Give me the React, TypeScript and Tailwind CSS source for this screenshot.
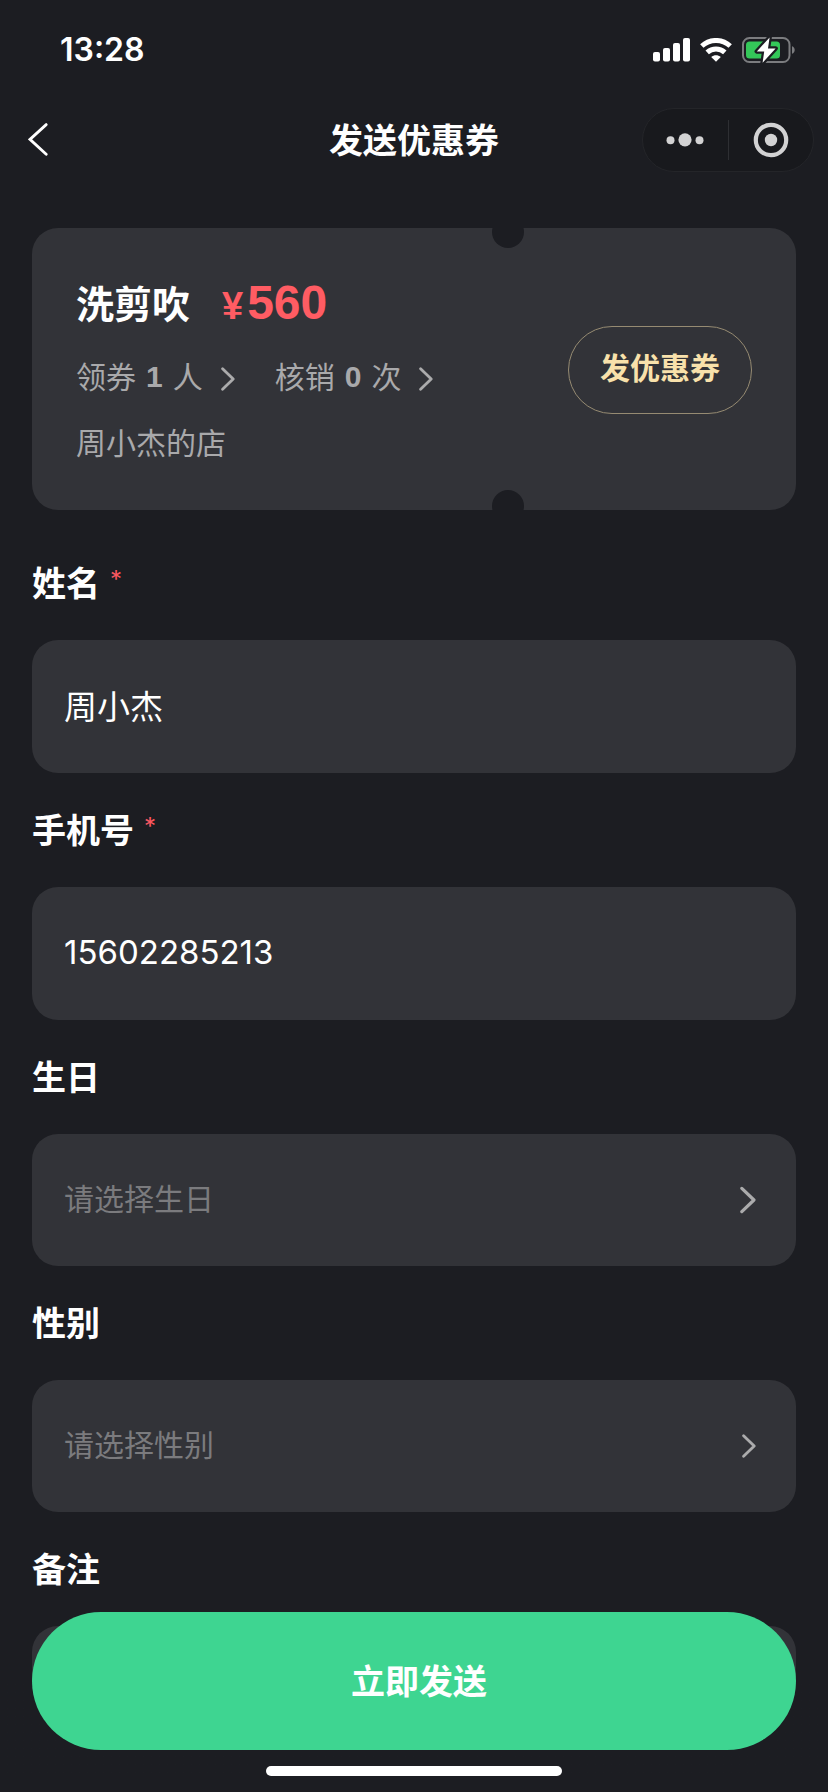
import { useState } from "react";

// ─────────────────────────────────────────────────────────────
// Icons
// ─────────────────────────────────────────────────────────────

const SignalIcon = () => (
  <svg width="38" height="24" viewBox="0 0 38 24" fill="#fff" aria-hidden="true">
    <rect x="1" y="14" width="7" height="9.5" rx="2" />
    <rect x="11" y="10" width="7" height="13.5" rx="2" />
    <rect x="21" y="5" width="7" height="18.5" rx="2" />
    <rect x="31" y="0" width="7" height="23.5" rx="2" />
  </svg>
);

const WifiIcon = () => (
  <svg width="32" height="24" viewBox="0 0 32 24" fill="none" aria-hidden="true">
    <path d="M1.8 8C10 .6 22 .6 30.2 8" stroke="#fff" strokeWidth="5" />
    <path d="M7.2 14.4c5-4.6 12.6-4.6 17.6 0" stroke="#fff" strokeWidth="5" />
    <path d="M16 23.8l-4.8-4.8c2.8-2.3 6.8-2.3 9.6 0z" fill="#fff" />
  </svg>
);

const BatteryIcon = () => (
  <svg width="54" height="28" viewBox="0 0 54 28" fill="none" aria-hidden="true">
    <rect x="1" y="2" width="46.5" height="24" rx="6.5" stroke="#7b7c7f" strokeWidth="2" />
    <path d="M50 10.2c3.6 1.2 3.6 6.4 0 7.6z" fill="#7b7c7f" />
    <rect x="4" y="5.5" width="34" height="17" rx="3.5" fill="#34c759" />
    <path
      d="M27.6 1.4L14.8 15.4h7.4l-1.6 11.4 13-14.4h-7.6z"
      fill="#fff"
      stroke="#1c1d22"
      strokeWidth="4.5"
      strokeLinejoin="round"
      paintOrder="stroke"
    />
  </svg>
);

const BackIcon = () => (
  <svg width="20" height="34" viewBox="0 0 20 34" fill="none" aria-hidden="true">
    <path d="M18.2 1.6L2 16.4l16.2 14.8" stroke="#fff" strokeWidth="2.8" strokeLinecap="round" />
  </svg>
);

const MoreIcon = () => (
  <svg width="38" height="14" viewBox="0 0 38 14" fill="#d2d2d3" aria-hidden="true">
    <circle cx="4.5" cy="7.3" r="4" />
    <circle cx="19" cy="6.8" r="6.6" />
    <circle cx="33.5" cy="7.3" r="4" />
  </svg>
);

const CloseIcon = () => (
  <svg width="36" height="36" viewBox="0 0 36 36" fill="none" aria-hidden="true">
    <circle cx="18" cy="18" r="15.2" stroke="#d2d2d3" strokeWidth="4.2" />
    <circle cx="18" cy="18" r="6.2" fill="#d2d2d3" />
  </svg>
);

const ChevronIcon = ({ className }: { className: string }) => (
  <svg className={className} viewBox="0 0 14 24" fill="none" aria-hidden="true">
    <path
      d="M1.6 1.8L12.2 12 1.6 22.2"
      stroke="#ababac"
      strokeWidth="2.8"
      strokeLinecap="round"
      strokeLinejoin="round"
    />
  </svg>
);

// ─────────────────────────────────────────────────────────────
// Form pieces
// ─────────────────────────────────────────────────────────────

const FieldLabel = ({ id, text, required }: { id: string; text: string; required?: boolean }) => (
  <label htmlFor={id} className="flex gap-2.5 pt-[34px] pb-8 text-[34px] leading-12 font-semibold">
    {text}
    {required && <span className="text-2xl leading-10 font-normal text-[#fb5760]">*</span>}
  </label>
);

const Stat = ({ label, value, unit }: { label: string; value: number; unit: string }) => (
  <button type="button" className="flex items-center text-[#a9a9ab]">
    <span>{label}</span>
    <span className="mx-2.5 font-['Liberation_Sans'] font-bold">{value}</span>
    <span>{unit}</span>
    <ChevronIcon className="mt-1 ml-[18px] h-6 w-3.5" />
  </button>
);

export default function App() {
  const [name, setName] = useState("周小杰");
  const [phone, setPhone] = useState("15602285213");
  const [gender, setGender] = useState("");

  return (
    <div className="relative flex h-screen flex-col overflow-hidden bg-[#1c1d22] font-[Inter,'Noto_Sans_CJK_SC',sans-serif] text-white">
      {/* Status bar */}
      <div className="flex h-25 shrink-0 items-center justify-between pr-8 pl-15">
        <span className="text-[32px] leading-10 font-semibold">13:28</span>
        <div className="flex items-center gap-2.5">
          <SignalIcon />
          <WifiIcon />
          <BatteryIcon />
        </div>
      </div>

      {/* Nav bar */}
      <header className="grid h-20 shrink-0 grid-cols-[1fr_auto_1fr] items-center px-3.5">
        <button type="button" aria-label="返回" className="ml-3.5 justify-self-start">
          <BackIcon />
        </button>
        <h1 className="pt-0.5 text-[34px] leading-12 font-semibold">发送优惠券</h1>
        <div className="flex h-16 w-43 items-center justify-self-end rounded-full border border-[#242529] bg-[#18191d]">
          <button type="button" aria-label="更多" className="flex flex-1 justify-center">
            <MoreIcon />
          </button>
          <div className="h-10 w-px bg-[#2e2f33]" />
          <button type="button" aria-label="关闭" className="flex flex-1 justify-center">
            <CloseIcon />
          </button>
        </div>
      </header>

      <main className="min-h-0 flex-1 overflow-y-auto px-8 pt-12 pb-48 [scrollbar-width:none]">
        {/* Coupon card */}
        <section className="relative mb-4 flex items-center justify-between overflow-hidden rounded-[26px] bg-[#323338] px-11 pt-9 pb-[34px]">
          <span className="absolute -top-3 right-68 size-8 rounded-full bg-[#1c1d22]" />
          <span className="absolute right-68 -bottom-3 size-8 rounded-full bg-[#1c1d22]" />
          <div>
            <div className="flex h-20 items-center gap-8">
              <h2 className="text-[38px] leading-12 font-semibold">洗剪吹</h2>
              <p className="flex items-baseline gap-1 font-['Liberation_Sans'] text-5xl leading-12 font-bold text-[#ff5c63]">
                <span className="text-[38px]">¥</span>
                <span>560</span>
              </p>
            </div>
            <div className="flex gap-10 text-3xl leading-[66px]">
              <Stat label="领券" value={1} unit="人" />
              <Stat label="核销" value={0} unit="次" />
            </div>
            <p className="text-3xl leading-[66px] text-[#a9a9ab]">周小杰的店</p>
          </div>
          <button
            type="button"
            className="h-22 w-46 rounded-full border border-[#968b72] pb-1 text-3xl font-semibold text-[#f8e1ab]"
          >
            发优惠券
          </button>
        </section>

        <form>
          <FieldLabel id="name" text="姓名" required />
          <input
            id="name"
            value={name}
            onChange={(e) => setName(e.target.value)}
            className="block h-[133px] w-full rounded-[26px] bg-[#323338] px-8 pb-1 text-[33px] outline-none"
          />

          <FieldLabel id="phone" text="手机号" required />
          <input
            id="phone"
            type="tel"
            value={phone}
            onChange={(e) => setPhone(e.target.value)}
            className="block h-[133px] w-full rounded-[26px] bg-[#323338] px-8 pb-1 text-[33px] outline-none"
          />

          <FieldLabel id="birthday" text="生日" />
          <div className="flex h-33 items-center rounded-[26px] bg-[#323338] pr-10 pl-8">
            <input
              id="birthday"
              readOnly
              placeholder="请选择生日"
              className="h-full min-w-0 flex-1 pb-0.5 text-3xl outline-none placeholder:text-[#7b7b7e]"
            />
            <ChevronIcon className="h-7 w-4" />
          </div>

          <FieldLabel id="gender" text="性别" />
          <div className="flex h-33 items-center rounded-[26px] bg-[#323338] pr-10 pl-8">
            <select
              id="gender"
              value={gender}
              onChange={(e) => setGender(e.target.value)}
              className="h-full min-w-0 flex-1 appearance-none pb-0.5 text-3xl text-[#7b7b7e] outline-none"
            >
              <option value="">请选择性别</option>
              <option value="male">男</option>
              <option value="female">女</option>
            </select>
            <ChevronIcon className="h-6 w-3.5" />
          </div>

          <FieldLabel id="remark" text="备注" />
          <textarea
            id="remark"
            className="block h-33 w-full resize-none rounded-[26px] bg-[#323338] p-8 text-3xl outline-none"
          />
        </form>
      </main>

      {/* Floating submit + home indicator */}
      <footer className="absolute inset-x-0 bottom-0 flex flex-col items-center gap-4 bg-linear-to-t from-[#1c1d22] from-60% to-transparent to-60% px-8 pb-4">
        <button
          type="button"
          className="h-[138px] w-full rounded-full bg-[#3ed591] pl-2.5 text-[34px] font-semibold"
        >
          立即发送
        </button>
        <div className="h-2.5 w-74 rounded-full bg-white" />
      </footer>
    </div>
  );
}
